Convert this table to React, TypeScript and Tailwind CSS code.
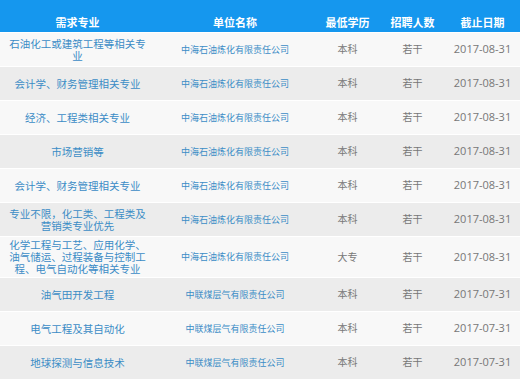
import React from "react";

type Row = { major: string; company: string; edu: string; num: string; date: string; tall?: boolean };

const rows: Row[] = [
  { major: "石油化工或建筑工程等相关专业", company: "中海石油炼化有限责任公司", edu: "本科", num: "若干", date: "2017-08-31" },
  { major: "会计学、财务管理相关专业", company: "中海石油炼化有限责任公司", edu: "本科", num: "若干", date: "2017-08-31" },
  { major: "经济、工程类相关专业", company: "中海石油炼化有限责任公司", edu: "本科", num: "若干", date: "2017-08-31" },
  { major: "市场营销等", company: "中海石油炼化有限责任公司", edu: "本科", num: "若干", date: "2017-08-31" },
  { major: "会计学、财务管理相关专业", company: "中海石油炼化有限责任公司", edu: "本科", num: "若干", date: "2017-08-31" },
  { major: "专业不限，化工类、工程类及营销类专业优先", company: "中海石油炼化有限责任公司", edu: "本科", num: "若干", date: "2017-08-31" },
  { major: "化学工程与工艺、应用化学、油气储运、过程装备与控制工程、电气自动化等相关专业", company: "中海石油炼化有限责任公司", edu: "大专", num: "若干", date: "2017-08-31", tall: true },
  { major: "油气田开发工程", company: "中联煤层气有限责任公司", edu: "本科", num: "若干", date: "2017-07-31" },
  { major: "电气工程及其自动化", company: "中联煤层气有限责任公司", edu: "本科", num: "若干", date: "2017-07-31" },
  { major: "地球探测与信息技术", company: "中联煤层气有限责任公司", edu: "本科", num: "若干", date: "2017-07-31" },
];

const font = { fontFamily: '"Open Sans", "Noto Sans CJK SC", sans-serif' };

export default function App() {
  return (
    <div className="w-[520px] h-[380px] overflow-hidden bg-white" style={font}>
      <div className="grid grid-cols-[155px_160px_65px_65px_75px] h-[32px] bg-[#1597ee] text-white font-bold text-[11px] leading-[14px] pt-[16px]">
        <div className="text-center">需求专业</div>
        <div className="text-center">单位名称</div>
        <div className="text-center">最低学历</div>
        <div className="text-center">招聘人数</div>
        <div className="text-center">截止日期</div>
      </div>
      {rows.map((r, i) => (
        <div
          key={i}
          className={`grid grid-cols-[155px_160px_65px_65px_75px] items-center border-t border-white ${
            r.tall ? "h-[41px]" : "h-[34px]"
          } ${i % 2 === 0 ? "bg-[#f8f8f8]" : "bg-[#ececec]"}`}
        >
          <div className="px-[8px] text-center text-[10.5px] leading-[12px] text-[#3b8cc6]">{r.major}</div>
          <div className="text-center text-[9px] leading-[12px] text-[#3b8cc6]">{r.company}</div>
          <div className="text-center text-[10px] text-[#777]">{r.edu}</div>
          <div className="text-center text-[10px] text-[#777]">{r.num}</div>
          <div className="text-center text-[11px] text-[#777]">{r.date}</div>
        </div>
      ))}
    </div>
  );
}
